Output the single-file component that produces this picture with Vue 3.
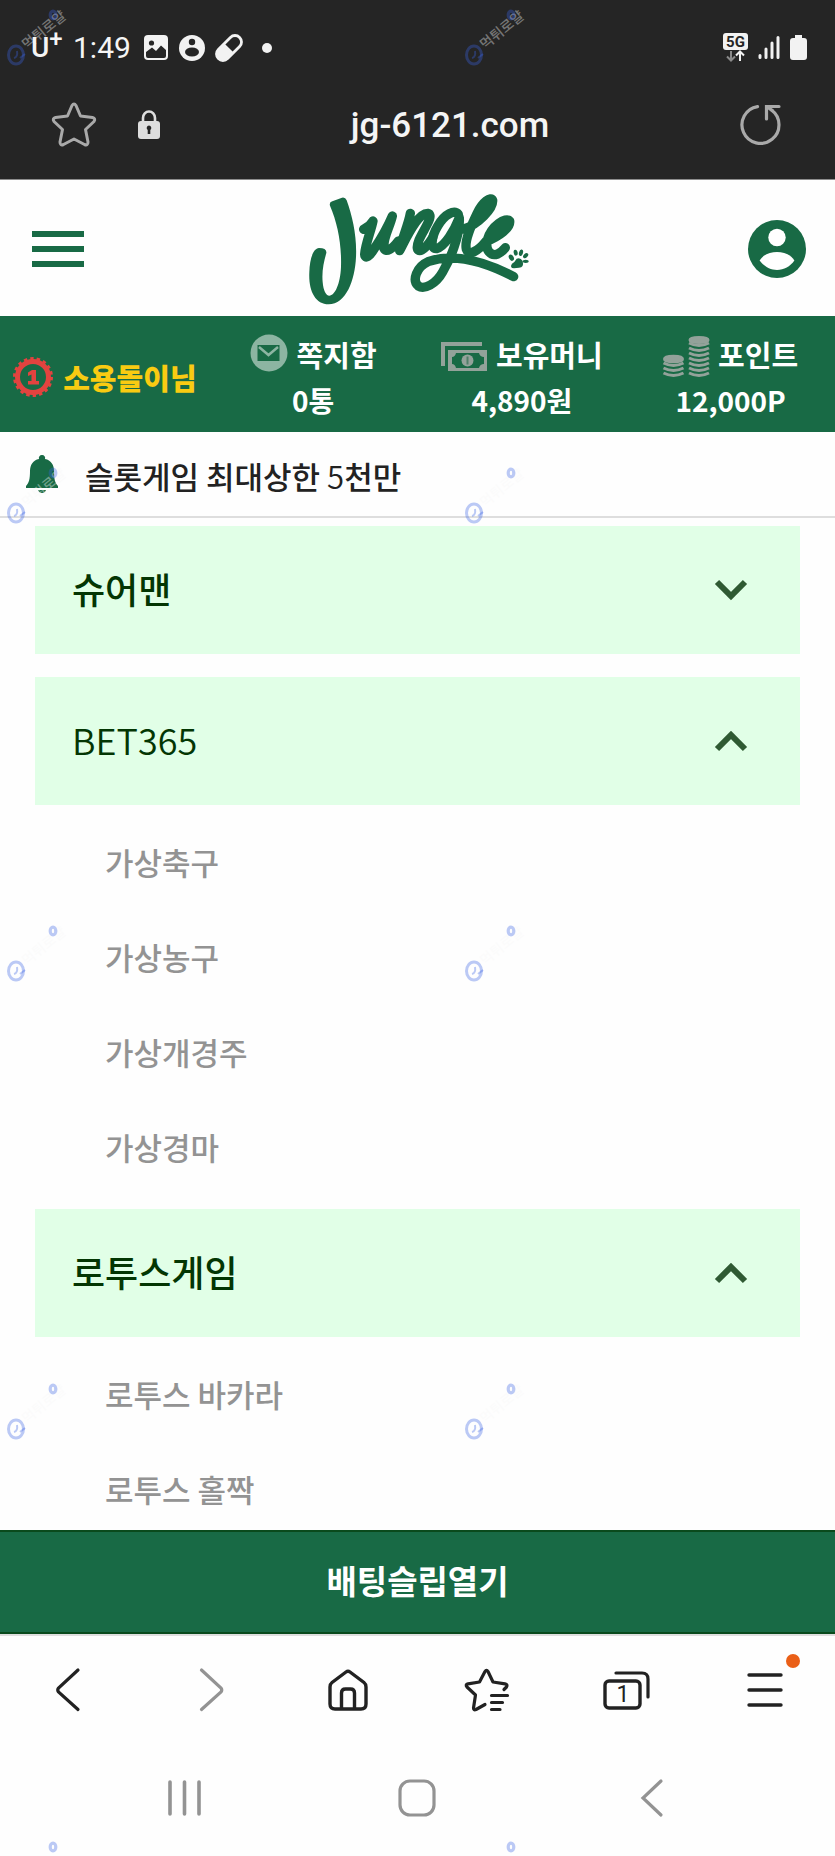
<script setup>
import { ref } from 'vue'

const stats = [
  { icon: 'mail', label: '쪽지함', value: '0통' },
  { icon: 'cash', label: '보유머니', value: '4,890원' },
  { icon: 'coins', label: '포인트', value: '12,000P' },
]

const groups = ref([
  { title: '슈어맨', open: false, items: [] },
  { title: 'BET365', latin: true, open: true, items: ['가상축구', '가상농구', '가상개경주', '가상경마'] },
  { title: '로투스게임', open: true, items: ['로투스 바카라', '로투스 홀짝'] },
])

const coinLines = [0, 1, 2, 3, 4, 5, 6]
const shortLines = [0, 1, 2]
</script>

<template>
  <div class="phone">
    <header class="chrome">
      <div class="status">
        <span class="carrier">U<sup>+</sup></span>
        <span class="clock">1:49</span>
        <svg viewBox="0 0 24 25" width="24" height="25">
          <rect x="0" y="0" width="24" height="25" rx="4" fill="#f2f2f2" />
          <circle cx="7.500" cy="8" r="2.600" fill="#252525" />
          <path d="M2 17 L8 12.500 L12 16 L17 10.500 L22 15 V21 Q22 23 20 23 H4 Q2 23 2 21 Z" fill="#252525" />
        </svg>
        <svg class="s-person" viewBox="0 0 26 26" width="26" height="26">
          <circle cx="13" cy="13" r="13" fill="#f2f2f2" />
          <circle cx="13" cy="7" r="3.200" fill="#252525" />
          <ellipse cx="13" cy="17" rx="7" ry="4.500" fill="#252525" />
        </svg>
        <svg class="s-pill" viewBox="0 0 28 28" width="28" height="28">
          <g transform="rotate(45 14 14)">
            <rect x="7.500" y="-1" width="13" height="30" rx="6.500" fill="none" stroke="#f2f2f2" stroke-width="2.800" />
            <path d="M7.500 14 H20.500 V23 A6.500 6.500 0 0 1 7.500 23 Z" fill="#f2f2f2" />
          </g>
        </svg>
        <i class="s-dot"></i>
        <span class="spacer"></span>
        <svg viewBox="0 0 26 29" width="26" height="29">
          <rect x="0" y="0" width="25" height="17" rx="3" fill="#f2f2f2" />
          <text x="12.500" y="14" text-anchor="middle" class="net">5G</text>
          <path d="M8 18 V27 M4 23.500 L8 27.500 L12 23.500" fill="none" stroke="#8a8a8a" stroke-width="2" />
          <path d="M17 28 V19 M13 22.500 L17 18.500 L21 22.500" fill="none" stroke="#f2f2f2" stroke-width="2" />
        </svg>
        <svg class="s-signal" viewBox="0 0 22 23" width="22" height="23">
          <path d="M2 19.500 V21.500 M8 13 V21.500 M14 7 V21.500 M20 1.500 V21.500" stroke="#f2f2f2" stroke-width="3" stroke-linecap="round" />
        </svg>
        <svg class="s-battery" viewBox="0 0 17 25" width="17" height="25">
          <path d="M5 0 H12 V3 H14 Q17 3 17 6 V22 Q17 25 14 25 H3 Q0 25 0 22 V6 Q0 3 3 3 H5 Z" fill="#f2f2f2" />
        </svg>
      </div>
      <div class="address">
        <button class="plain" aria-label="즐겨찾기">
          <svg viewBox="0 0 46 46" width="46" height="46">
            <path d="M21 4.500 Q23 1.500 25 4.500 L29.500 15 L41.500 16.500 Q45 17.500 43 20.500 L34.500 28.500 L37 41 Q37 45 33.500 43.500 L23 38 L12.500 43.500 Q9 45 9 41 L11.500 28.500 L3 20.500 Q1 17.500 4.500 16.500 L16.500 15 Z" fill="none" stroke="#a9a9a9" stroke-width="3" stroke-linejoin="round" />
          </svg>
        </button>
        <svg class="lock" viewBox="0 0 22 29" width="22" height="29">
          <path d="M5 13 V8 A6 6.500 0 0 1 17 8 V13" fill="none" stroke="#dedede" stroke-width="2.600" />
          <rect x="0" y="11" width="22" height="18" rx="3" fill="#dedede" />
          <path d="M11 15.500 A2.500 2.500 0 0 1 12.300 20 V24 H9.700 V20 A2.500 2.500 0 0 1 11 15.500 Z" fill="#252525" />
        </svg>
        <span class="url">jg-6121.com</span>
        <button class="plain" aria-label="새로고침">
          <svg viewBox="0 0 42 44" width="42" height="44">
            <path d="M17.500 4.600 A18.500 18.500 0 1 0 31.500 8" fill="none" stroke="#a9a9a9" stroke-width="3.200" stroke-linecap="round" />
            <path d="M26.500 17 V4.500 H39" fill="none" stroke="#a9a9a9" stroke-width="3.200" stroke-linecap="round" />
            <path d="M27 5 L33 9" stroke="#a9a9a9" stroke-width="3.200" />
          </svg>
        </button>
      </div>
    </header>

    <div class="site-head">
      <button class="plain" aria-label="메뉴">
        <svg viewBox="0 0 52 36" width="52" height="36">
          <path d="M0 3 H52 M0 18 H52 M0 33 H52" stroke="#186a45" stroke-width="6" />
        </svg>
      </button>
      <a href="#" class="logo" aria-label="Jungle">
        <svg viewBox="54 38 660 336" width="220" height="112">
          <path fill="#186a45" d="M117 76 Q114 66 124 63 L153 52 Q163 50 167 60 C185 110 198 170 195 230 C192 300 165 372 113 372 C72 372 52 330 55 275 C56 240 65 204 84 203 Q108 203 106 218 C98 245 92 275 95 305 C97 330 105 346 115 346 C132 346 148 310 150 260 C152 190 140 130 117 76 Z" />
          <g fill="none" stroke="#186a45" stroke-width="28" stroke-linecap="round" stroke-linejoin="round">
            <path d="M218 147 C231 141 240 133 246 122 C241 150 223 190 221 222 C222 238 236 228 248 208 C270 175 290 140 304 107 C297 140 274 175 279 205 C285 218 304 206 322 182" />
            <path d="M358 99 C352 135 332 175 326 211 C345 175 378 99 410 99 C432 104 397 148 384 179 C370 214 386 218 404 200 C413 190 419 182 425 172" />
            <path d="M502 102 C490 88 462 100 441 136 C419 172 418 206 436 205 C462 198 490 150 505 112 C508 170 475 240 455 275 C435 311 400 329 382 317 C362 300 377 259 411 244 C460 227 540 222 668 289" />
            <path d="M518 146 C562 132 607 84 605 60 C600 46 574 66 559 98 C540 138 520 180 526 207 C533 228 562 212 584 184 C625 168 659 142 656 122 C645 109 601 136 589 178 C582 213 600 228 620 221 C633 215 638 208 643 202" />
          </g>
          <g fill="#186a45">
            <ellipse cx="661" cy="232" rx="7" ry="10" transform="rotate(-30 661 232)" />
            <ellipse cx="674" cy="217" rx="6" ry="9" transform="rotate(-10 674 217)" />
            <ellipse cx="690" cy="217" rx="6" ry="10" transform="rotate(15 690 217)" />
            <ellipse cx="704" cy="226" rx="6" ry="9" transform="rotate(45 704 226)" />
            <ellipse cx="704" cy="243" rx="9" ry="5" />
            <path d="M677 235 Q688 230 695 242 Q700 262 684 262 L669 264 Q655 262 663 250 Q672 244 677 235 Z" />
          </g>
        </svg>
      </a>
      <button class="plain" aria-label="내 정보">
        <svg viewBox="0 0 58 58" width="58" height="58">
          <circle cx="29" cy="29" r="29" fill="#186a45" />
          <circle cx="29" cy="17.500" r="8.700" fill="#fff" />
          <path d="M11.600 40.500 C15 34.500 22 32 29 32 S43 34.500 46.400 40.500 C42 46.500 36 50 29 50 S16 46.500 11.600 40.500 Z" fill="#fff" />
        </svg>
      </button>
    </div>

    <section class="account">
      <div class="member">
        <svg viewBox="0 0 42 42" width="42" height="42">
          <circle cx="21" cy="21" r="15.500" fill="none" stroke="#e2433f" stroke-width="5" />
          <circle cx="21" cy="21" r="18.500" fill="none" stroke="#e2433f" stroke-width="3" stroke-dasharray="3.400 3.050" />
          <path d="M16 16.500 L20 14 H24 V25 H27 V28.500 H16 V25 H19.500 V18.500 L16 20 Z" fill="#e2433f" />
        </svg>
        <strong class="nick">소용돌이님</strong>
      </div>
      <div v-for="s in stats" :key="s.label" class="stat">
        <div class="stat-top">
          <svg v-if="s.icon === 'mail'" viewBox="0 0 38 38" width="38" height="38">
            <circle cx="19" cy="18" r="18.500" fill="#8cb5a2" />
            <rect x="7.500" y="10" width="22" height="16" fill="#186a45" />
            <path d="M9 12 L18.500 20 L28 12" fill="none" stroke="#8cb5a2" stroke-width="2.500" />
          </svg>
          <svg v-else-if="s.icon === 'cash'" viewBox="0 0 46 30" width="46" height="30">
            <path d="M2 27 V5 H41" fill="none" stroke="#93a29a" stroke-width="4" />
            <rect x="7" y="11" width="39" height="21" fill="#93a29a" />
            <path d="M15 14 H38 Q39 18 43 18 V25 Q39 25 38 29 H15 Q14 25 11 25 V18 Q14 18 15 14 Z" fill="#186a45" />
            <circle cx="26.500" cy="21.500" r="6" fill="#93a29a" />
            <path d="M26.500 17.500 V25.500" stroke="#4f8069" stroke-width="2" />
          </svg>
          <svg v-else viewBox="0 0 46 36" width="46" height="36">
            <g stroke="#93a29a" fill="none" stroke-width="3">
              <ellipse cx="36" cy="4" rx="9" ry="2.400" fill="#93a29a" />
              <path v-for="n in coinLines" :key="n" :d="`M26 ${7 + n * 5} q10 5 20 0`" />
              <ellipse cx="10.500" cy="23" rx="9" ry="2.800" fill="#93a29a" />
              <path v-for="n in shortLines" :key="'s' + n" :d="`M0.500 ${27 + n * 5} q10 5 20 0`" />
            </g>
          </svg>
          <span>{{ s.label }}</span>
        </div>
        <div class="stat-value">{{ s.value }}</div>
      </div>
    </section>

    <div class="notice">
      <svg viewBox="0 0 32 38" width="32" height="38">
        <path d="M16 0 A3 3 0 0 1 19 4 C25 5 28 10 28 16 C28 24 29 28 32 31 V33 H0 V31 C3 28 4 24 4 16 C4 10 7 5 13 4 A3 3 0 0 1 16 0 Z" fill="#186a45" />
        <path d="M12 35 H20 Q19 38 16 38 T12 35 Z" fill="#186a45" />
      </svg>
      <p>슬롯게임 최대상한 <span class="thin">5</span>천만</p>
    </div>

    <main class="menu">
      <section v-for="g in groups" :key="g.title">
        <button class="group" :class="{ thin: g.latin }" :aria-expanded="g.open" @click="g.open = !g.open">
          <span>{{ g.title }}</span>
          <svg viewBox="0 0 32 20" width="32" height="20">
            <path :d="g.open ? 'M2 18 L16 4 L30 18' : 'M2 2 L16 16 L30 2'" fill="none" stroke="#2f5a33" stroke-width="6" />
          </svg>
        </button>
        <ul v-if="g.open">
          <li v-for="i in g.items" :key="i"><a href="#">{{ i }}</a></li>
        </ul>
      </section>
    </main>

    <button class="slip">배팅슬립열기</button>

    <nav class="tools">
      <button class="plain" aria-label="뒤로">
        <svg viewBox="0 0 44 44" width="44" height="44">
          <path d="M30 2 L10.500 20 Q9 22 10.500 24 L30 41.500" fill="none" stroke="#222" stroke-width="3.200" stroke-linecap="round" />
        </svg>
      </button>
      <button class="plain" aria-label="앞으로">
        <svg viewBox="0 0 44 44" width="44" height="44">
          <path d="M14.500 2 L34 20 Q35.500 22 34 24 L14.500 41.500" fill="none" stroke="#939393" stroke-width="3.200" stroke-linecap="round" />
        </svg>
      </button>
      <button class="plain" aria-label="홈">
        <svg viewBox="0 0 44 44" width="44" height="44">
          <path d="M20 4 Q22 2.500 24 4 L38 14.500 Q40 16 40 19 V36 Q40 41 35 41 H9 Q4 41 4 36 V19 Q4 16 6 14.500 Z" fill="none" stroke="#222" stroke-width="3.400" />
          <path d="M15.500 41 V25 Q15.500 21 19.500 21 H24.500 Q28.500 21 28.500 25 V41" fill="none" stroke="#222" stroke-width="3.400" />
        </svg>
      </button>
      <button class="plain" aria-label="북마크">
        <svg viewBox="0 0 44 44" width="44" height="44">
          <path d="M39 21.500 L41.500 19 Q43 16.500 40 15.800 L28 14 L23 3.500 Q21.500 1 20 3.500 L14.500 14 L3 15.800 Q0 16.500 2 19 L10.500 27 L8.500 40 Q8.500 42.500 11 41.500 L20 36.500" fill="none" stroke="#222" stroke-width="3.200" stroke-linecap="round" stroke-linejoin="round" />
          <path d="M26.500 27.500 H42.500 M26.500 34.500 H37.500 M26.500 41.500 H35" stroke="#222" stroke-width="3.200" stroke-linecap="round" />
        </svg>
      </button>
      <button class="plain" aria-label="탭 1개">
        <svg viewBox="0 0 46 44" width="46" height="44">
          <rect x="2" y="13" width="35" height="27" rx="4" fill="none" stroke="#222" stroke-width="3.400" />
          <path d="M13 5 H39 Q45 5 45 11 V29" fill="none" stroke="#222" stroke-width="3.200" stroke-linecap="round" />
          <text x="20" y="34" text-anchor="middle" class="tab-count">1</text>
        </svg>
      </button>
      <button class="plain more" aria-label="더보기">
        <svg viewBox="0 0 36 44" width="36" height="44">
          <path d="M2 7 H34 M2 22 H34 M2 37 H34" stroke="#222" stroke-width="3.400" stroke-linecap="round" />
        </svg>
        <i class="badge"></i>
      </button>
    </nav>

    <nav class="system">
      <button class="plain" aria-label="최근 앱">
        <svg viewBox="0 0 36 38" width="36" height="38">
          <path d="M4 3 V35 M18.500 3 V35 M33 3 V35" stroke="#939393" stroke-width="3.600" stroke-linecap="round" />
        </svg>
      </button>
      <button class="plain" aria-label="홈 화면">
        <svg viewBox="0 0 38 38" width="38" height="38">
          <rect x="2" y="2" width="34" height="34" rx="10" fill="none" stroke="#939393" stroke-width="3.200" />
        </svg>
      </button>
      <button class="plain" aria-label="이전">
        <svg viewBox="0 0 24 38" width="24" height="38">
          <path d="M22 2 L4 19 L22 36" fill="none" stroke="#939393" stroke-width="3.200" stroke-linecap="round" />
        </svg>
      </button>
    </nav>

    <div class="marks" aria-hidden="true">
      <svg v-for="n in 10" :key="n" viewBox="0 0 76 76" width="76" height="76">
        <text v-if="n < 9" x="0" y="0" transform="translate(27 50) rotate(-39)" class="mark-text">먹튀로얄</text>
        <g fill="none" stroke="#3c64e6" stroke-opacity=".34">
          <ellipse cx="16" cy="55" rx="7.500" ry="9" stroke-width="3" />
          <path d="M17 51 Q18 57 14 58 M20 58 L25 54" stroke-width="2" />
          <ellipse cx="53" cy="15" rx="2.800" ry="3.800" stroke-width="3.200" />
        </g>
      </svg>
    </div>
  </div>
</template>

<style>
body {
  background: #fff;
}
</style>

<style scoped>
.phone {
  position: relative;
  display: flex;
  flex-direction: column;
  height: 100vh;
  overflow: hidden;
  background: #fefefe;
  color: #222;
  font-family: 'Noto Sans CJK KR', sans-serif;
  font-weight: 500;
}

.plain {
  display: flex;
  align-items: center;
  justify-content: center;
  padding: 0;
  border: 0;
  background: none;
}

svg {
  display: block;
  flex: none;
  overflow: visible;
}

.chrome {
  flex: none;
  box-sizing: border-box;
  height: 180px;
  border-bottom: 1px solid #8d8d8d;
  background: #252525;
  color: #f5f5f5;
  font-family: Roboto, sans-serif;
}

.status {
  display: flex;
  align-items: center;
  height: 70px;
  padding: 25px 28px 0 31px;
  box-sizing: border-box;
}

.carrier {
  width: 42px;
  font-size: 28px;
  line-height: 32px;
  font-weight: 500;
}

.carrier sup {
  font-size: 24px;
  line-height: 0;
}

.clock {
  width: 71px;
  font-size: 30px;
  line-height: 32px;
  font-weight: 400;
}

.s-person {
  margin-left: 11px;
}

.s-pill {
  margin-left: 10px;
}

.s-dot {
  width: 10px;
  height: 10px;
  margin-left: 19px;
  border-radius: 50%;
  background: #f2f2f2;
}

.spacer {
  flex: 1;
}

.net {
  font: 700 15px Roboto, sans-serif;
  fill: #252525;
}

.s-signal {
  margin-left: 9px;
}

.s-battery {
  margin-left: 10px;
}

.address {
  display: flex;
  align-items: center;
  height: 108px;
  padding: 0 53px 0 51px;
}

.lock {
  margin-left: 41px;
}

.url {
  flex: 1;
  padding-top: 2px;
  text-align: center;
  font-size: 35px;
  font-weight: 500;
}

.site-head {
  flex: none;
  box-sizing: border-box;
  display: grid;
  grid-template-columns: 1fr auto 1fr;
  align-items: center;
  height: 136px;
  padding: 2px 29px 0 32px;
  background: #fefefe;
}

.site-head > :first-child {
  justify-self: start;
}

.site-head > :last-child {
  justify-self: end;
}

.account {
  flex: none;
  box-sizing: border-box;
  display: grid;
  grid-template-columns: repeat(4, 1fr);
  align-items: center;
  height: 116px;
  padding-top: 6px;
  background: #186a45;
  color: #fff;
  font-size: 29px;
  line-height: 46px;
  font-weight: 700;
}

.member,
.stat-top {
  display: flex;
  align-items: center;
  justify-content: center;
  gap: 9px;
}

.stat-top {
  height: 46px;
}

.nick {
  color: #f9cb12;
}

.stat-value {
  text-align: center;
  font-size: 28px;
}

.notice {
  flex: none;
  display: flex;
  align-items: center;
  gap: 27px;
  height: 84px;
  padding: 0 26px;
  border-bottom: 2px solid #dedede;
}

.notice p {
  margin: 0;
  padding-top: 4px;
  font-size: 31px;
  line-height: 46px;
}

.thin {
  font-weight: 350;
}

.menu {
  flex: 1;
  min-height: 0;
  padding: 8px 35px 0;
  overflow-y: auto;
  scrollbar-width: none;
}

.group {
  display: flex;
  align-items: center;
  justify-content: space-between;
  width: 100%;
  height: 128px;
  padding: 0 53px 0 37px;
  border: 0;
  background: #e1ffe7;
  color: #033603;
  font-family: inherit;
  font-size: 36px;
  font-weight: 500;
}

.group span {
  padding-bottom: 5px;
}

.group.thin {
  font-weight: 350;
}

.group[aria-expanded='false'] {
  margin-bottom: 23px;
}

ul {
  margin: 0;
  padding: 9px 0 15px 70px;
  list-style: none;
}

li a {
  display: block;
  color: #939393;
  font-size: 31px;
  line-height: 95px;
  text-decoration: none;
}

.slip {
  flex: none;
  height: 104px;
  padding: 0 0 5px;
  border: 0;
  border-top: 2px solid #0a4a1c;
  border-bottom: 2px solid #0a4a1c;
  background: #186a45;
  color: #fff;
  font-family: inherit;
  font-size: 33px;
  font-weight: 700;
}

.tools {
  flex: none;
  display: grid;
  grid-template-columns: repeat(6, 1fr);
  height: 107px;
  border-top: 2px solid #dedede;
}

.more {
  position: relative;
}

.badge {
  position: absolute;
  top: 18px;
  left: calc(50% + 21px);
  width: 14px;
  height: 14px;
  border-radius: 50%;
  background: #ea5f17;
}

.tab-count {
  font: 400 23px Roboto, sans-serif;
  fill: #222;
}

.system {
  flex: none;
  display: grid;
  grid-template-columns: repeat(3, 1fr);
  box-sizing: border-box;
  height: 113px;
  padding: 0 67px 4px;
}

.marks {
  position: absolute;
  inset: 0;
  display: grid;
  grid-template-columns: repeat(2, 458px);
  grid-auto-rows: 458px;
  overflow: hidden;
  pointer-events: none;
}

.mark-text {
  font: 500 14px 'Noto Sans CJK KR', sans-serif;
  fill: #f8f8f8;
  fill-opacity: .4;
}
</style>
